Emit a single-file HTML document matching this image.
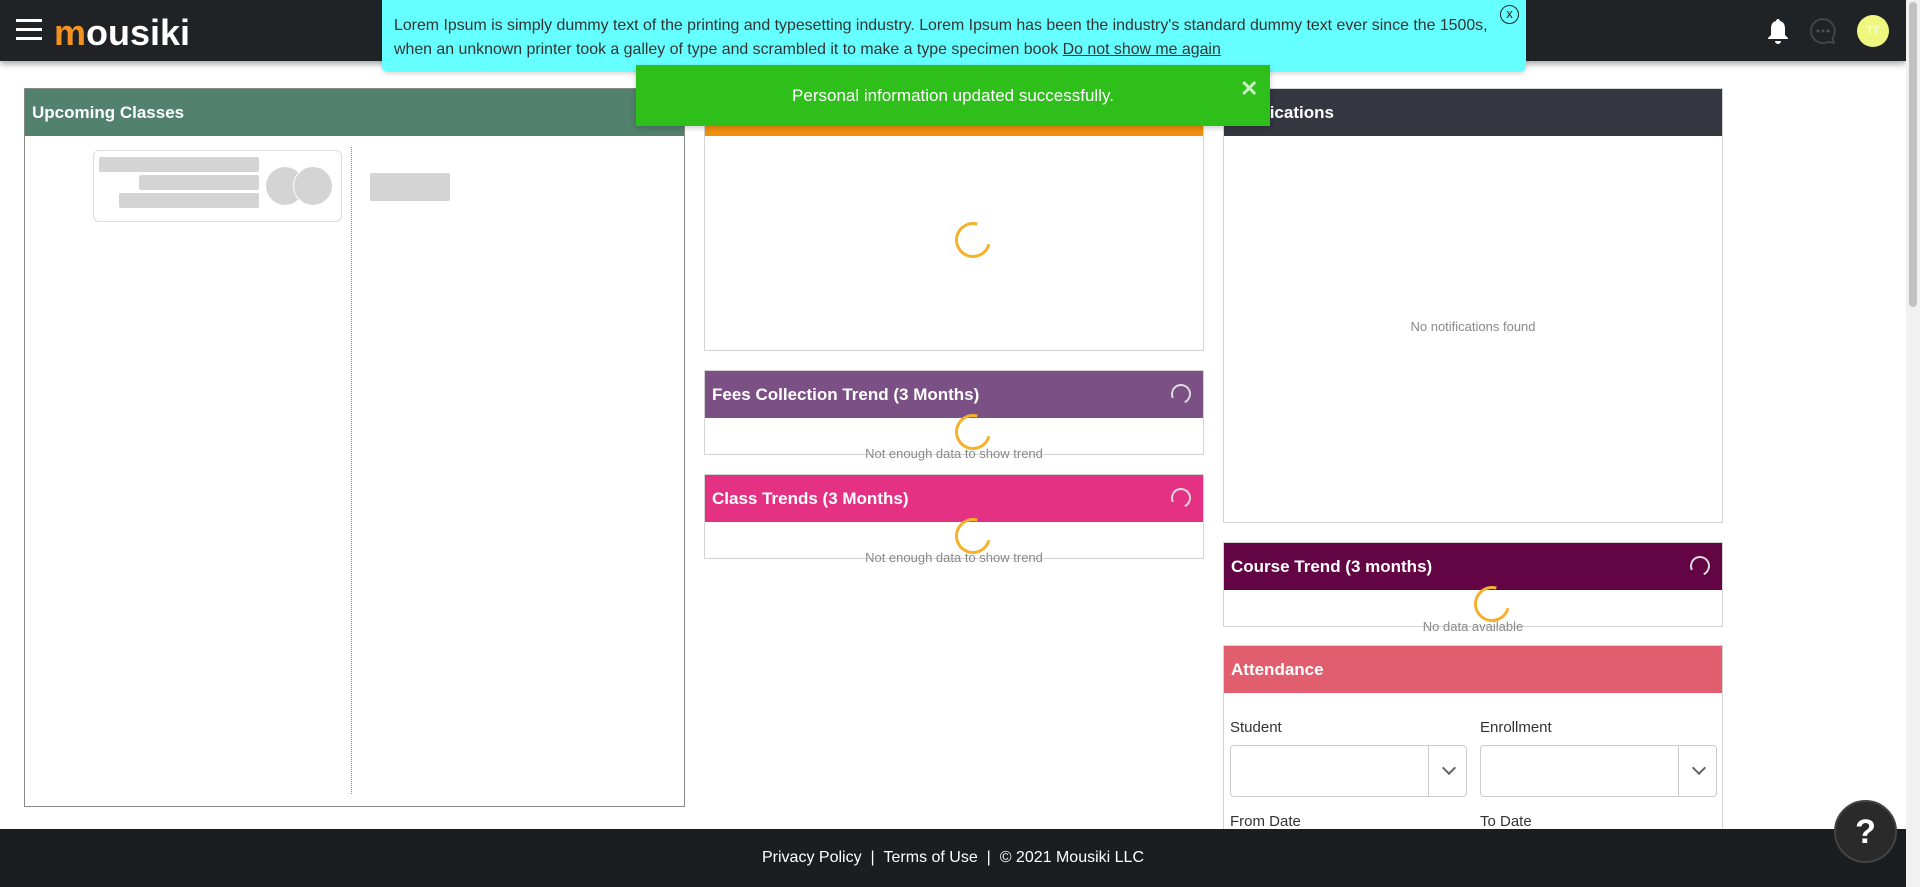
<!DOCTYPE html>
<html><head><meta charset="utf-8"><style>
*{box-sizing:border-box;margin:0;padding:0}
html,body{width:1920px;height:887px;overflow:hidden}
body{background:#fff;font-family:"Liberation Sans",sans-serif;position:relative}
.abs{position:absolute}
.hdr{left:0;top:0;width:1906px;height:61px;background:#1f2326;box-shadow:0 3px 6px rgba(0,0,0,.35)}
.panel{position:absolute;border:1px solid #d4d4d4;background:#fff}
.ph{height:47px;color:#fff;font-weight:bold;font-size:17px;line-height:47px;padding-left:7px;position:relative}
.spin{position:absolute;width:36px;height:36px;border:3px solid #f5b12c;border-right-color:transparent;border-radius:50%;transform:rotate(-30deg)}
.sspin{position:absolute;right:12px;top:13px;width:20px;height:20px;border:2px solid #ddd;border-bottom-color:transparent;border-radius:50%;transform:rotate(20deg)}
.msg{position:absolute;width:100%;text-align:center;color:#8a8a8a;font-size:13px}
.lbl{position:absolute;font-size:15px;color:#333}
.sel{position:absolute;height:52px;border:1px solid #ccc;border-radius:4px}
.sel:after{content:"";position:absolute;right:0;top:0;width:37px;height:50px;border-left:1px solid #ccc}
.chev{position:absolute;right:12px;top:17px;width:10px;height:10px;border-right:2px solid #666;border-bottom:2px solid #666;transform:rotate(45deg);z-index:1}
.gb{position:absolute;background:#d4d4d4;border-radius:2px}
</style></head><body>
<div class="abs hdr"></div>
<div class="abs" style="left:16px;top:19px;width:26px;height:3px;background:#fff;box-shadow:0 9px 0 #fff,0 18px 0 #fff"></div>
<div class="abs" style="left:54px;top:12px;font-size:36px;font-weight:bold;color:#fff"><span style="color:#f39221">m</span>ousiki</div>
<svg class="abs" style="left:1766px;top:17px" width="24" height="28" viewBox="0 0 24 28"><path d="M12 2c-1 0-2 1-2 2C6 5 5 8 5 12v6l-3 3v1h20v-1l-3-3v-6c0-4-1-7-5-8 0-1-1-2-2-2z M9 24a3 3 0 0 0 6 0z" fill="#fff"/></svg>
<svg class="abs" style="left:1808px;top:16px" width="30" height="30" viewBox="0 0 30 30"><path d="M15 3a12 12 0 1 0 0 24c2 0 4-.5 5.5-1.3L26 27l-1.5-5A12 12 0 0 0 15 3z" fill="none" stroke="#444" stroke-width="2"/><circle cx="10" cy="15" r="1.5" fill="#555"/><circle cx="15" cy="15" r="1.5" fill="#555"/><circle cx="20" cy="15" r="1.5" fill="#555"/></svg>
<div class="abs" style="left:1857px;top:15px;width:32px;height:32px;border-radius:50%;background:#f0f77f;color:#fff;font-size:11px;text-align:center;line-height:32px">TT</div>
<div class="abs" style="left:1906px;top:0;width:14px;height:887px;background:#f1f1f1"></div>
<div class="abs" style="left:1909px;top:2px;width:8px;height:305px;background:#c1c1c1;border-radius:4px"></div>

<div class="panel" style="left:24px;top:88px;width:661px;height:719px;border-color:#888">
<div class="ph" style="background:#52816d">Upcoming Classes</div>
<div class="abs" style="left:68px;top:61px;width:249px;height:72px;border:1px solid #ddd;border-radius:6px"></div>
<div class="gb" style="left:74px;top:68px;width:160px;height:15px"></div>
<div class="gb" style="left:114px;top:86px;width:120px;height:15px"></div>
<div class="gb" style="left:94px;top:104px;width:140px;height:15px"></div>
<div class="abs" style="left:241px;top:78px;width:38px;height:38px;border-radius:50%;background:#d4d4d4"></div>
<div class="abs" style="left:268px;top:77px;width:40px;height:40px;border-radius:50%;background:#d4d4d4;border:1px solid #fff"></div>
<div class="abs" style="left:326px;top:58px;height:647px;border-left:1px dotted #888"></div>
<div class="gb" style="left:345px;top:84px;width:80px;height:28px"></div>
</div>

<div class="panel" style="left:704px;top:88px;width:500px;height:263px">
<div style="height:47px;background:#f0900f"></div>
<div class="spin" style="left:250px;top:133px"></div>
</div>
<div class="panel" style="left:704px;top:370px;width:500px;height:85px">
<div class="ph" style="background:#7b5185">Fees Collection Trend (3 Months)<div class="sspin"></div></div>
<div class="spin" style="left:250px;top:43px"></div>
<div class="msg" style="top:75px">Not enough data to show trend</div>
</div>
<div class="panel" style="left:704px;top:474px;width:500px;height:85px">
<div class="ph" style="background:#e53183">Class Trends (3 Months)<div class="sspin"></div></div>
<div class="spin" style="left:250px;top:43px"></div>
<div class="msg" style="top:75px">Not enough data to show trend</div>
</div>

<div class="panel" style="left:1223px;top:88px;width:500px;height:435px">
<div class="ph" style="background:#343740">Notifications</div>
<div class="msg" style="top:230px">No notifications found</div>
</div>
<div class="panel" style="left:1223px;top:542px;width:500px;height:85px">
<div class="ph" style="background:#630444">Course Trend (3 months)<div class="sspin"></div></div>
<div class="spin" style="left:250px;top:43px"></div>
<div class="msg" style="top:76px">No data available</div>
</div>
<div class="panel" style="left:1223px;top:645px;width:500px;height:240px;overflow:hidden">
<div class="ph" style="background:#e05e6e">Attendance</div>
<div class="lbl" style="left:6px;top:73px">Student</div>
<div class="lbl" style="left:256px;top:73px">Enrollment</div>
<div class="sel" style="left:6px;top:99px;width:237px"><div class="chev"></div></div>
<div class="sel" style="left:256px;top:99px;width:237px"><div class="chev"></div></div>
<div class="lbl" style="left:6px;top:167px">From Date</div>
<div class="lbl" style="left:256px;top:167px">To Date</div>
</div>

<div class="abs" style="left:0;top:829px;width:1906px;height:58px;background:#1b1e21;color:#fff;font-size:16px;text-align:center;line-height:58px">Privacy Policy &nbsp;| &nbsp;Terms of Use &nbsp;| &nbsp;© 2021 Mousiki LLC</div>
<div class="abs" style="left:1834px;top:800px;width:63px;height:63px;border-radius:50%;background:#2a2a2a;border:2px solid #444;color:#fff;font-weight:bold;font-size:34px;text-align:center;line-height:60px">?</div>

<div class="abs" style="left:382px;top:0;width:1144px;height:72px;background:#66ffff;border-radius:0 0 6px 6px;box-shadow:0 2px 4px rgba(0,0,0,.15)"></div>
<div class="abs" style="left:394px;top:14px;font-size:15.9px;line-height:24px;color:#333;white-space:nowrap">Lorem Ipsum is simply dummy text of the printing and typesetting industry. Lorem Ipsum has been the industry's standard dummy text ever since the 1500s,<br>when an unknown printer took a galley of type and scrambled it to make a type specimen book <u>Do not show me again</u></div>
<div class="abs" style="left:1500px;top:5px;width:19px;height:19px;border:1.5px solid #222;border-radius:50%;font-size:13px;text-align:center;line-height:15px;color:#222">x</div>

<div class="abs" style="left:636px;top:65px;width:634px;height:61px;background:#2fbf1b;color:#fff;font-size:17px;text-align:center;line-height:61px;box-shadow:0 2px 6px rgba(0,0,0,.2)">Personal information updated successfully.</div>
<div class="abs" style="left:1240px;top:76px;color:#c8f0c0;font-size:22px;font-weight:bold">✕</div>
</body></html>
